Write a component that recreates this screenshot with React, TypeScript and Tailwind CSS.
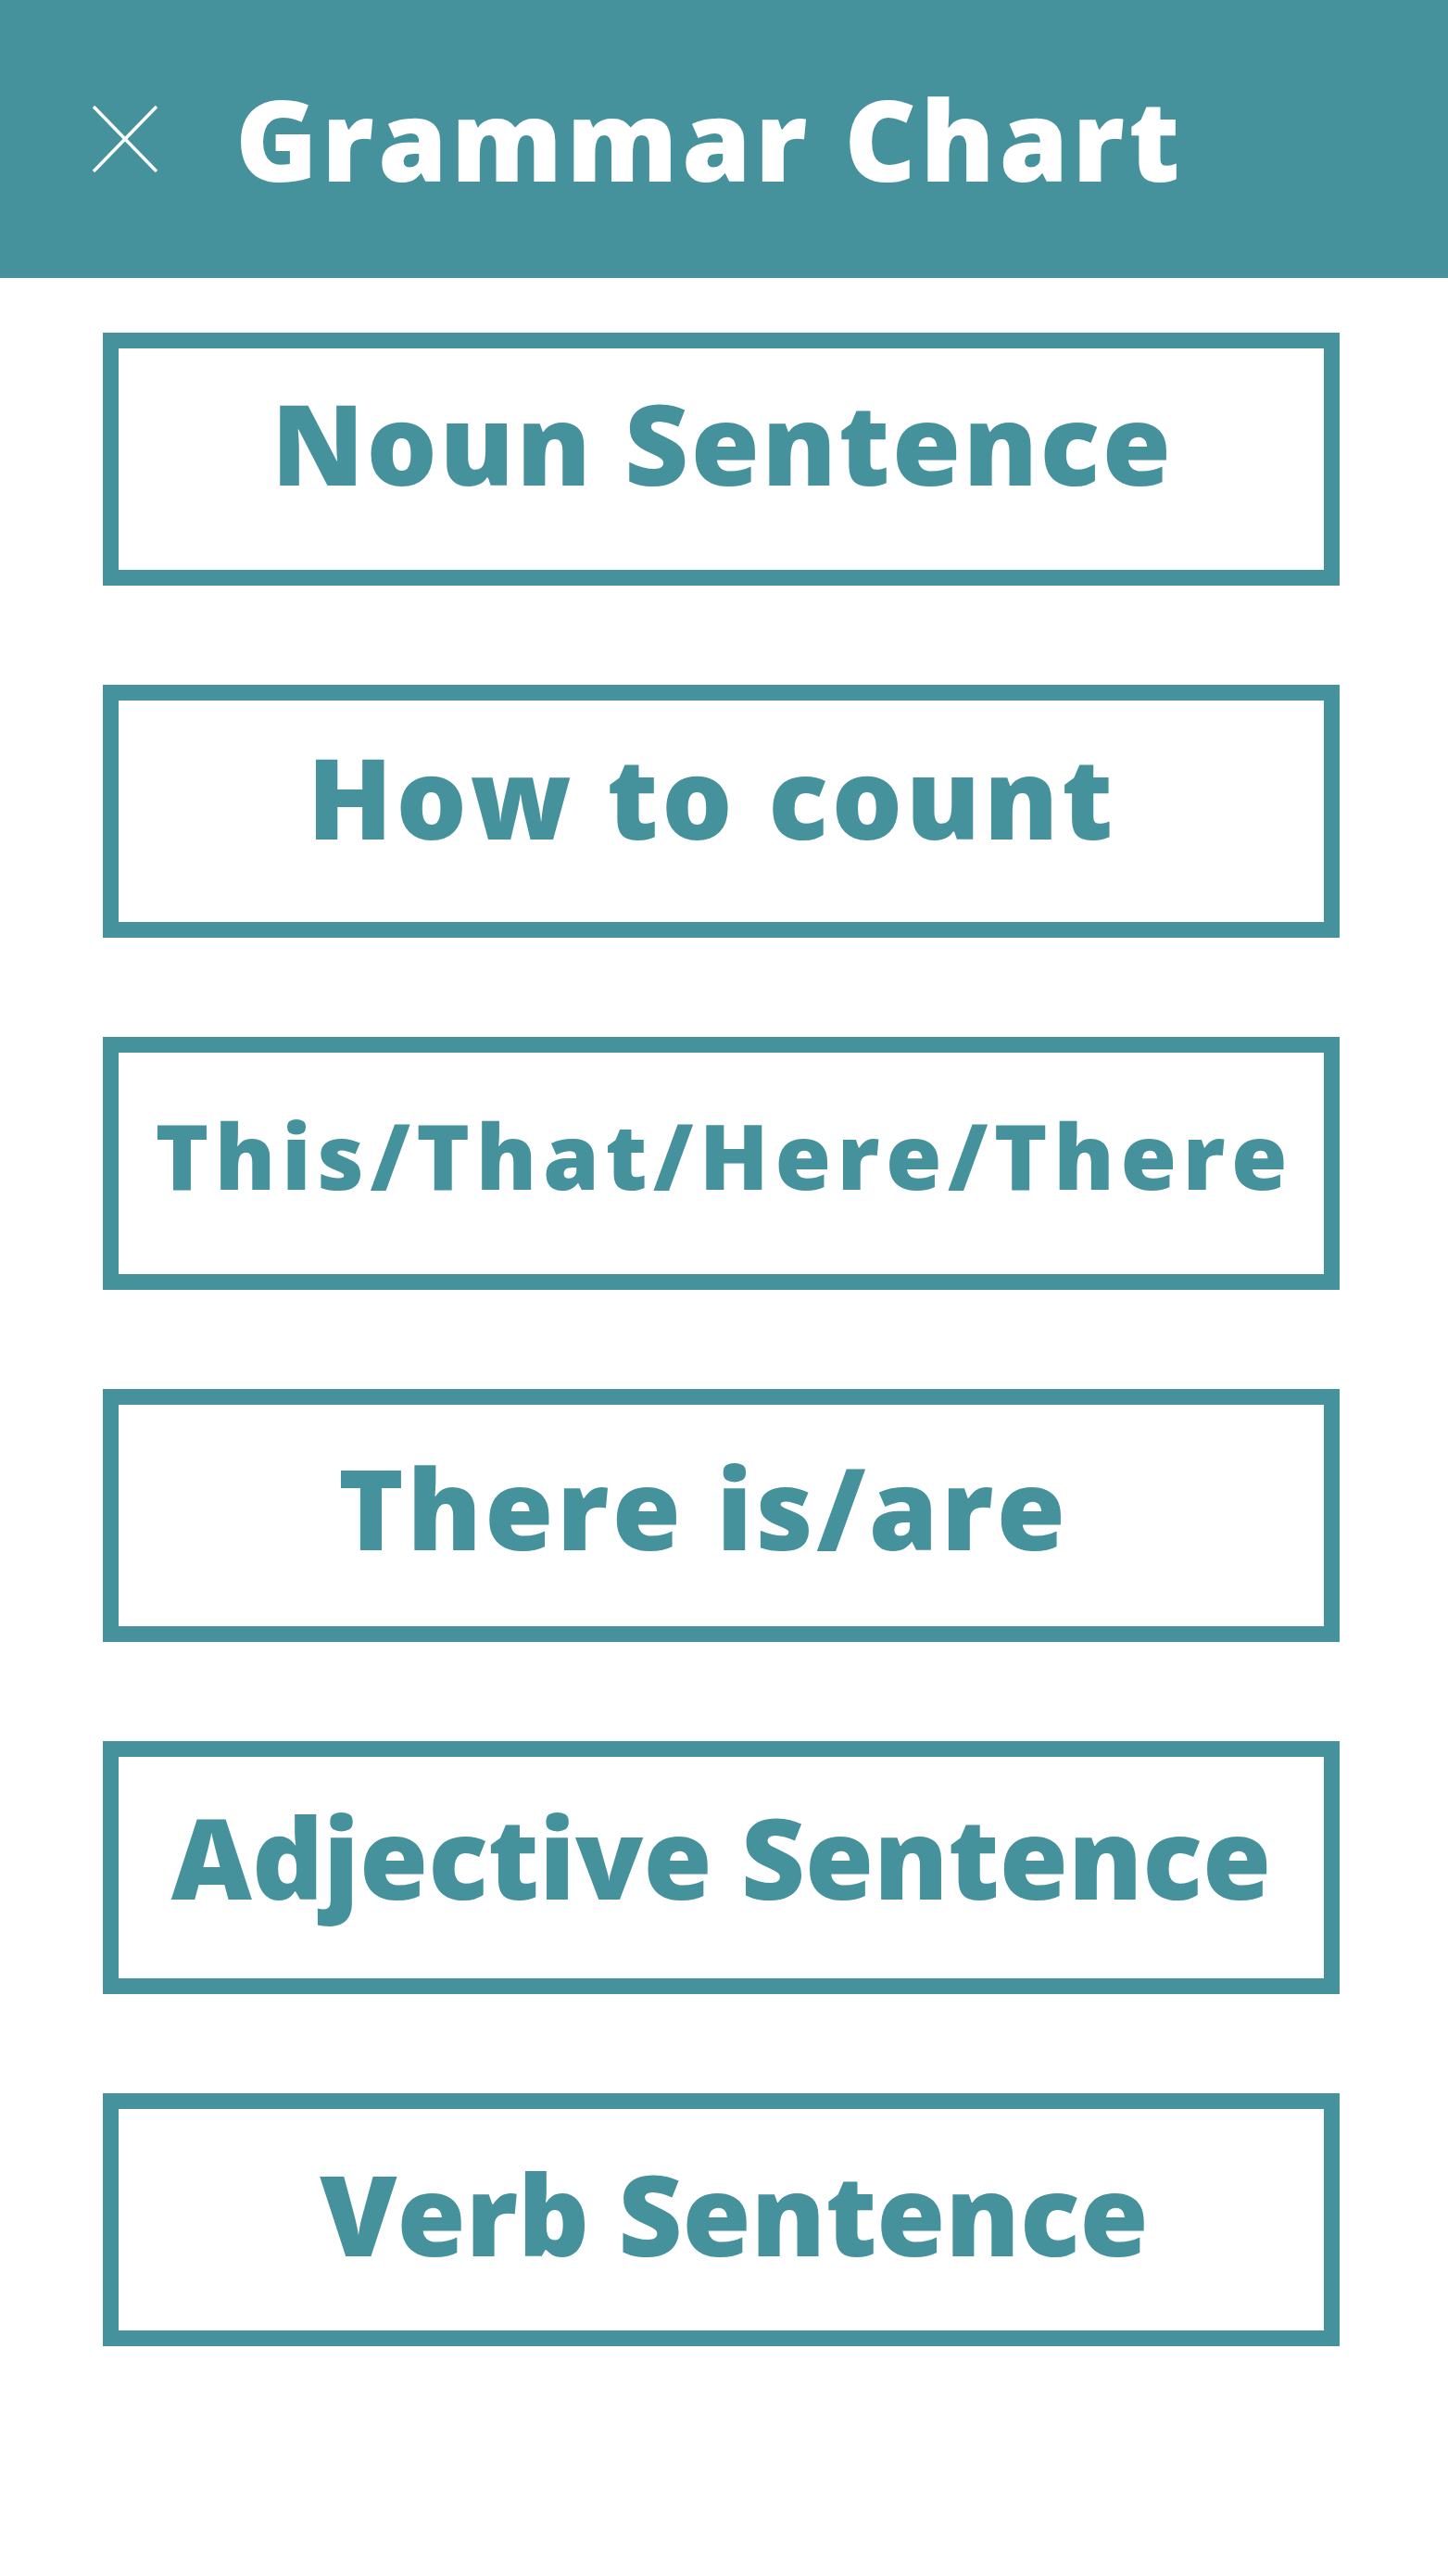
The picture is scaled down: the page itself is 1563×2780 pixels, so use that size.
import React from 'react';

const items = [
  { label: 'Noun Sentence', cls: 'text-[120px] tracking-[2.5px] pl-[2.5px]', pad: 'pt-[42px]' },
  { label: 'How to count', cls: 'text-[120px] tracking-[3.7px] pl-[3.7px] pr-[24px]', pad: 'pt-[44px]' },
  { label: 'This/That/Here/There', cls: 'text-[98px] tracking-[6.5px] pl-[6.5px]', pad: 'pt-[61px]' },
  { label: 'There is/are', cls: 'text-[120px] tracking-[3.5px] pl-[3.5px] pr-[42px]', pad: 'pt-[51px]' },
  { label: 'Adjective Sentence', cls: 'text-[120px]', pad: 'pt-[48px]' },
  { label: 'Verb Sentence', cls: 'text-[120px] pl-[28px]', pad: 'pt-[53px]' },
];

const CloseIcon = () => (
  <svg width="72" height="72" viewBox="0 0 72 72" fill="none" stroke="#ffffff" strokeWidth="3.5">
    <line x1="2" y1="1" x2="70" y2="71" />
    <line x1="70" y1="1" x2="2" y2="71" />
  </svg>
);

const App: React.FC = () => {
  return (
    <div className="min-h-screen bg-white font-['Open_Sans',sans-serif]">
      {/* Header */}
      <header className="h-[300px] bg-[#46929c] flex items-center pl-[99px]">
        <CloseIcon />
        <h1 className="ml-[83px] text-[120px] font-extrabold text-white leading-none tracking-[4.4px]">Grammar Chart</h1>
      </header>

      {/* Chart list */}
      <main className="pt-[59px] pl-[111px] flex flex-col gap-[107px]">
        {items.map((item) => (
          <button
            key={item.label}
            className={`w-[1335px] h-[273px] border-[17px] border-[#46929c] bg-white flex items-start justify-center ${item.pad}`}
          >
            <span className={`${item.cls} font-extrabold text-[#46929c] leading-none whitespace-nowrap`}>
              {item.label}
            </span>
          </button>
        ))}
      </main>
    </div>
  );
};

export default App;
